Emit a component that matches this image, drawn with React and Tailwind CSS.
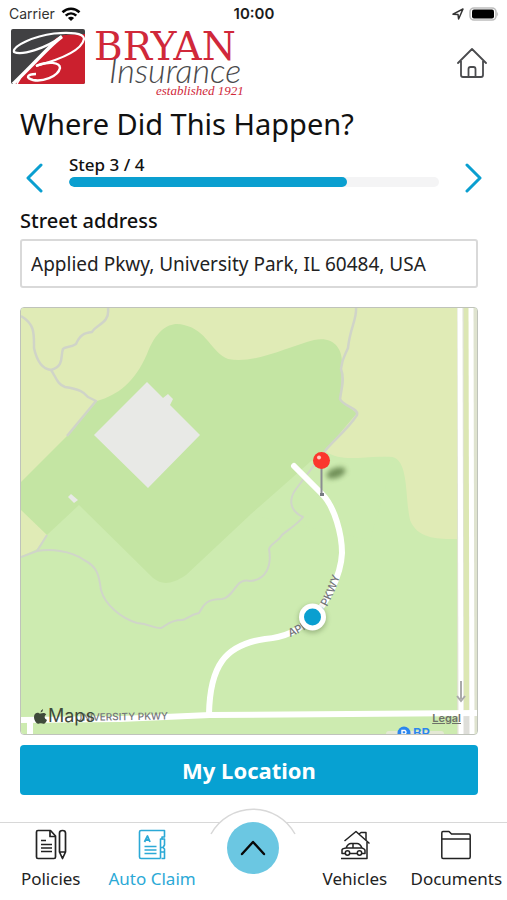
import React from 'react';

function StatusBar() {
  return (
    <div className="grid h-7 grid-cols-3 items-center pl-[9px] pr-2 font-['Inter',sans-serif] text-sm text-[#333]">
      <div className="flex items-center gap-[6px]">
        <span>Carrier</span>
        <svg width="20" height="15" viewBox="0 0 20 15" fill="none" stroke="#050505" strokeWidth="2.6" aria-hidden="true">
          <path d="M1.5 5.2 C6.4 .6 13.6 .6 18.5 5.2" />
          <path d="M4.7 8.6 C7.8 5.7 12.2 5.7 15.3 8.6" />
          <path d="M10 14 L6.9 10.9 C8.7 9.3 11.3 9.3 13.1 10.9 Z" fill="#050505" stroke="none" />
        </svg>
      </div>
      <div className="text-center text-[15px] font-semibold text-[#1c1c1c]">10:00</div>
      <div className="flex items-center justify-end gap-1">
        <svg width="12" height="12" viewBox="0 0 12 12" fill="none" stroke="#333" strokeWidth="1.5" strokeLinejoin="round" aria-hidden="true">
          <path d="M1 6.2 L11 1 L6.6 11 L6 6.4 Z" />
        </svg>
        <svg width="31" height="15" viewBox="0 0 31 15" aria-hidden="true">
          <rect x="2" y="1" width="26" height="12" rx="4" fill="#fff" stroke="#bdbdbd" strokeWidth="1.6" />
          <rect x="4" y="2.600" width="22" height="9" rx="2" fill="#000" />
          <path d="M29.2 5 Q31 7 29.2 9.500 Z" fill="#bdbdbd" />
        </svg>
      </div>
    </div>
  );
}

function Logo() {
  return (
    <svg width="246" height="70" viewBox="10 28 246 70" className="overflow-visible" role="img" aria-label="Bryan Insurance">
      <defs>
        <clipPath id="tile">
          <rect x="11" y="29" width="74" height="55" rx="2" />
        </clipPath>
      </defs>
      <g clipPath="url(#tile)">
        <rect x="11" y="29" width="74" height="55" fill="#414143" />
        <path d="M15 84 L56 38 L64 35 L86 34 V84 Z" fill="#cb202e" />
        <path d="M61 37 C46 48 22 56 14 52 C12 46 34 36 54 33.500 C70 32 84 33 84 39 C82 50 62 59 36 66" fill="none" stroke="#fff" strokeWidth="2.2" />
        <path d="M62 36.500 C50 45 40 58 13 84" fill="none" stroke="#fff" strokeWidth="3.400" />
        <path d="M22 75 L17 84" fill="none" stroke="#fff" strokeWidth="1.600" />
        <path d="M36 66 C48 61 60 62 60 68 C58 77 42 82 33 80 C25 78 27 74 36 74" fill="none" stroke="#fff" strokeWidth="2.400" />
      </g>
      <text x="94" y="60" fontSize="39" fill="#d0283a" className="font-['DejaVu_Serif',serif]">BRYAN</text>
      <text x="109" y="83" fontSize="34" fill="#4a4a4c" className="font-['Lato',sans-serif] font-light italic">Insurance</text>
      <text x="156" y="95" fontSize="13" fill="#d0283a" className="font-['Liberation_Serif',serif] italic">established 1921</text>
    </svg>
  );
}

function Chevron({ flip }) {
  return (
    <svg width="18" height="30" viewBox="0 0 18 30" fill="none" stroke="#0a9fd0" strokeWidth="3" strokeLinecap="round" strokeLinejoin="round" aria-hidden="true">
      <path d={flip ? 'M3 2 L16 15 L3 28' : 'M15 2 L2 15 L15 28'} />
    </svg>
  );
}

function AreaMap() {
  return (
    <svg viewBox="21 308 456 426" className="block h-auto w-full" role="img" aria-label="Map of Applied Pkwy">
      <defs>
        <filter id="soft" x="-50%" y="-50%" width="200%" height="200%">
          <feGaussianBlur stdDeviation="2.5" />
        </filter>
      </defs>
      <rect x="20" y="307" width="458" height="428" fill="#cdebb0" />
      <path d="M20 307 H458 V539 C440 539 418 540 410 520 C405 498 409 460 392 457 C372 455 355 465 328 457 L260 500 L100 480 L47 535 L37 549 L20 557 Z" fill="#e0ebb6" />
      <path d="M20 483 L67 436 L97 401 C118 395 135 382 147 354 C157 327 172 321 184 325 C207 330 211 352 228 359 C256 364 287 347 314 340 C333 336 342 348 342 362 L341 401 L357 413 L325 451 L250 515 L186 575 C171 585 162 585 153 578 L79 505 L47 535 L20 509 Z" fill="#c4e5a3" />
      <path d="M325 451 C345 465 370 453 394 458 L370 540 L250 515 L310 462 Z" fill="#cdebb0" />
      <path d="M147 382 L163 398 L168 394 L173 399 L170 405 L200 435 L148 488 L94 435 Z" fill="#e8e9e6" />
      <path d="M68 497 L71 494 L78 500 L74 503 Z" fill="#e8e9e6" />
      <g fill="none" stroke="#d0d4c8" strokeWidth="2.500" strokeLinejoin="round">
        <path d="M21 316 C35 324 34 334 34 348 C37 362 43 369 51 370 C56 377 57 384 65 387 C79 389 84 392 88 397 L96 401 L67 436" />
        <path d="M108 308 C110 324 96 324 92 332 C84 333 80 335 76 344 C70 348 65 346 63 349 C60 356 65 366 51 370" />
        <path d="M356 308 C357 319 350 328 348 348 C345 355 342 358 341 369 C345 380 341 390 340 399 C344 407 359 408 357 415 C348 429 332 442 325 451" />
      </g>
      <g fill="none" stroke="#d0d5c9" strokeWidth="2" strokeLinejoin="round">
        <path d="M325 451 L296 489 C288 500 290 511 303 517 C298 524 285 532 282 535 C278 542 271 543 269 549 C272 566 266 580 250 581 C235 577 235 597 222 599 C204 599 203 607 199 613 C189 615 186 620 182 620 C169 620 166 626 161 628 C155 629 150 624 137 623 C121 618 105 605 101 590 C99 576 98 567 84 560 C70 550 50 549 37 551 L21 557" />
        <path d="M37 551 L47 535" />
      </g>
      <rect x="457" y="308" width="22" height="427" fill="#dfe3cf" />
      <rect x="464" y="308" width="5" height="427" fill="#dce7b3" />
      <rect x="463" y="716" width="8" height="19" fill="#deded9" />
      <g fill="none" stroke="#fff">
        <path d="M20 720 L120 719 L210 715 L477 713" strokeWidth="6" />
        <path d="M30 719 V735" strokeWidth="6" />
        <path d="M209 714 C210 667 224 645 265 639 C290 637 304 626 312 617 C326 605 341 576 342 553 C342 535 335 507 322 494 L294 466" strokeWidth="6" strokeLinecap="round" />
        <path d="M460 308 L461 735" strokeWidth="5" />
        <path d="M471 308 L472 735" strokeWidth="5" />
      </g>
      <path d="M461 681 V699 M457 696 L461 701 L465 696" fill="none" stroke="#aaa" strokeWidth="2" />
      <g className="font-['Inter',sans-serif] font-medium" fill="#73767a">
        <path id="parkway" d="M290 637 C304 632 318 622 327 607 C333 596 339 581 343 566" fill="none" />
        <text fontSize="11"><textPath href="#parkway">APPLIED PKWY</textPath></text>
        <text x="75" y="721" fontSize="10" transform="rotate(-1 75 721)">UNIVERSITY PKWY</text>
      </g>
      <ellipse cx="336" cy="473" rx="10" ry="5" fill="#4c6a35" opacity=".7" filter="url(#soft)" transform="rotate(-20 336 473)" />
      <path d="M321.5 465 V495" stroke="#8b8d92" strokeWidth="2" />
      <rect x="320" y="493" width="4" height="3" fill="#777b82" />
      <circle cx="321.500" cy="460.500" r="8.500" fill="#fb372d" />
      <circle cx="319" cy="457.500" r="2" fill="#ffc8bf" />
      <circle cx="312.500" cy="619" r="14" fill="#5d7649" opacity=".45" filter="url(#soft)" />
      <circle cx="312.500" cy="617" r="13.500" fill="#fff" />
      <circle cx="312.500" cy="617" r="8.500" fill="#0a9fd0" />
      <rect x="386" y="731" width="58" height="8" rx="3" fill="#e4e8d5" />
      <circle cx="404" cy="733" r="6.500" fill="#2b86ee" />
      <path d="M402 737 V730.500 H405 Q407 732 405 734 H402" fill="none" stroke="#fff" strokeWidth="1.400" />
      <text x="413" y="738" fontSize="13" fill="#2b86ee" className="font-['Inter',sans-serif] font-semibold">BP</text>
    </svg>
  );
}

function PoliciesIcon() {
  return (
    <svg width="32" height="32" viewBox="0 0 32 32" fill="none" stroke="currentColor" strokeWidth="1.7" strokeLinejoin="round" aria-hidden="true">
      <path d="M3 1.500 H15.500 L20.500 7 V28 Q20.500 29.500 19 29.500 H3 Q1.500 29.500 1.500 28 V3 Q1.500 1.500 3 1.500 Z" />
      <path d="M15 2 V7.500 H20.500" />
      <path d="M6 11.500 H11 M6 15.500 H17 M6 19 H17 M6 22.500 H17" />
      <path d="M24.500 4 Q24.500 1.500 27.500 1.500 Q30.500 1.500 30.500 4 V23 L27.500 29.500 L24.500 23 Z M24.500 23 H30.500 M27.500 27 V29.500" />
    </svg>
  );
}

function ClaimIcon() {
  return (
    <svg width="28" height="32" viewBox="0 0 28 32" fill="none" stroke="currentColor" strokeWidth="1.6" strokeLinejoin="round" aria-hidden="true">
      <path d="M22.500 29.500 H3 Q1.500 29.500 1.500 28 V3 Q1.500 1.500 3 1.500 H26.500 V8 H24 V10 H22.500 V29.500" />
      <path d="M24 10 H26.500 V16 L25 18.500 H23 M25 18.500 L26.500 20 V23 H23 M26.500 23 V29.500 H23.500" />
      <path d="M6.500 17.500 H18.500 M6.500 21 H18.500 M6.500 24.500 H18.500" />
      <path d="M6.500 13 L9.500 7 L12 13 M8 11 H11" strokeWidth="1.8" />
    </svg>
  );
}

function VehiclesIcon() {
  return (
    <svg width="30" height="30" viewBox="0 0 30 30" fill="none" stroke="currentColor" strokeWidth="1.5" strokeLinejoin="round" aria-hidden="true">
      <path d="M4.500 11 L16 1.500 L29.500 13.500" />
      <path d="M19 4 L21 2.500 H26 V10 M27 12 V28.500 H1" />
      <path d="M5.500 23.500 H2 V20 Q2 18.500 6 18 Q8 13.500 11 13.500 H17 Q20 13.500 22 18 Q25 19 25 20.500 V23.500 H22 M9.500 23.500 H17.500 M6 18 H22 M13 13.500 V18" />
      <circle cx="7.500" cy="23" r="2.200" />
      <circle cx="19.500" cy="23" r="2.200" />
    </svg>
  );
}

function DocumentsIcon() {
  return (
    <svg width="30" height="30" viewBox="0 0 30 30" fill="none" stroke="currentColor" strokeWidth="1.5" strokeLinejoin="round" aria-hidden="true">
      <path d="M.8 27 V3 Q.8 1.500 2 1.500 H8 L10.500 4 H28 Q29.200 4 29.200 5.500 V27 Q29.200 28.500 28 28.500 H2 Q.8 28.500 .8 27 Z M1 9 H29" />
    </svg>
  );
}

function NavItem({ label, icon, active }) {
  return (
    <a href="#" aria-current={active ? 'page' : undefined} className={`flex flex-col items-center whitespace-nowrap ${active ? 'text-[#2ba9d6]' : 'text-[#222]'}`}>
      <span className="flex h-8 items-center">{icon}</span>
      <span className="mt-[6px] text-[17px] leading-6">{label}</span>
    </a>
  );
}

export default function App() {
  return (
    <div className="flex min-h-screen flex-col bg-white font-['Noto_Sans','Open_Sans',sans-serif] text-[#111]">
      <StatusBar />
      <header className="flex items-center justify-between pl-[10px] pr-5">
        <Logo />
        <button type="button" aria-label="Home">
          <svg width="30" height="30" viewBox="0 0 30 30" fill="none" stroke="#4a4b4e" strokeWidth="1.8" strokeLinecap="round" strokeLinejoin="round" aria-hidden="true">
            <path d="M1 15 L15 1 L29 15 M4 13 V27 Q4 29 6 29 H24 Q26 29 26 27 V13 M11.500 29 V21 Q11.500 19 13.500 19 H16.500 Q18.500 19 18.500 21 V29" />
          </svg>
        </button>
      </header>
      <main className="pl-5 pr-[29px]">
        <h1 className="mt-1 text-[29px] leading-[44px]">Where Did This Happen?</h1>
        <div className="-mr-1 mt-[7px] flex items-start justify-between gap-[25px] pl-[6px]">
          <button type="button" aria-label="Previous step" className="mt-[10px]"><Chevron /></button>
          <div className="flex-1">
            <div id="step" className="text-[17px] font-medium leading-6">Step 3 / 4</div>
            <div role="progressbar" aria-labelledby="step" aria-valuenow={75} className="h-[10px] overflow-hidden rounded-full bg-[#f4f4f5]">
              <div className="h-full w-3/4 rounded-full bg-[#0a9fd0]" />
            </div>
          </div>
          <button type="button" aria-label="Next step" className="mt-[10px]"><Chevron flip /></button>
        </div>
        <label htmlFor="address" className="mt-[14px] block text-[20px] font-medium leading-7">Street address</label>
        <input id="address" type="text" defaultValue="Applied Pkwy, University Park, IL 60484, USA" className="mt-1 block h-[49px] w-full rounded-[3px] border-2 border-[#d9d9d9] px-[9px] text-[19px] text-[#222]" />
        <div className="relative mt-[19px] overflow-hidden rounded border border-[#bfc3bb]">
          <AreaMap />
          <div className="absolute bottom-2 left-[13px] flex items-center gap-px text-[#3f4a3a]">
            <svg width="13" height="15" viewBox="0 0 13 15" fill="currentColor" aria-hidden="true">
              <path d="M9 0 Q9 3 6.500 3.500 Q6.500 1 9 0 Z M6.500 4.500 C8 4.500 10 2.800 12.300 5.500 C9.800 7 10.200 10 13 11 C11 15.500 9.500 15 8.500 14.500 Q6.800 13.800 5 14.500 C2.500 15.800 0 11 0 8 C0 4 3.500 3.300 5 4.200 Q6 4.700 6.500 4.500 Z" />
            </svg>
            <span className="font-['Inter',sans-serif] text-lg leading-5">Maps</span>
          </div>
          <a href="#" className="absolute bottom-2 right-4 font-['Inter',sans-serif] text-[11px] font-semibold leading-4 text-[#6d7168] underline">Legal</a>
        </div>
        <button type="button" className="mt-[10px] h-[50px] w-full rounded bg-[#07a1d2] text-[22px] font-bold text-white">My Location</button>
      </main>
      <nav className="relative mt-auto grid h-[78px] grid-cols-5 border-t border-[#d8d8d8] pt-[6px]">
        <NavItem label="Policies" icon={<PoliciesIcon />} />
        <NavItem label="Auto Claim" icon={<ClaimIcon />} active />
        <div className="relative flex justify-center">
          <svg width="88" height="27" viewBox="0 0 88 27" className="absolute -top-[21px]" aria-hidden="true">
            <path d="M2 26 A48 48 0 0 1 86 26" fill="#fff" stroke="#d8d8d8" strokeWidth="1.500" />
          </svg>
          <button type="button" aria-label="Open menu" className="relative -mt-[7px] flex size-[52px] items-center justify-center rounded-full bg-[#6bc7e2]">
            <svg width="26" height="16" viewBox="0 0 26 16" fill="none" stroke="#080808" strokeWidth="2.400" strokeLinecap="round" strokeLinejoin="round" aria-hidden="true">
              <path d="M2 14 L13 2 L24 14" />
            </svg>
          </button>
        </div>
        <NavItem label="Vehicles" icon={<VehiclesIcon />} />
        <NavItem label="Documents" icon={<DocumentsIcon />} />
      </nav>
    </div>
  );
}
